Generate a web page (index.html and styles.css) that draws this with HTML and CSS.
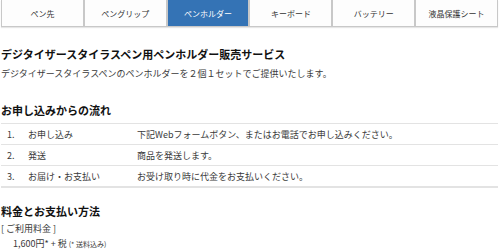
FILE: index.html
```html
<!DOCTYPE html>
<html lang="ja">
<head>
    <meta charset="UTF-8">
    <meta name="viewport" content="width=device-width, initial-scale=1.0">
    <title>ペンホルダー販売サービス</title>
    <link rel="stylesheet" href="styles.css">
</head>
<body>
    <ul class="tabs">
        <li class="tab">ペン先</li>
        <li class="tab">ペングリップ</li>
        <li class="tab active">ペンホルダー</li>
        <li class="tab">キーボード</li>
        <li class="tab">バッテリー</li>
        <li class="tab">液晶保護シート</li>
    </ul>

    <h1 class="title">デジタイザースタイラスペン用ペンホルダー販売サービス</h1>
    <p class="lead">デジタイザースタイラスペンのペンホルダーを２個１セットでご提供いたします。</p>

    <h2 class="section-title">お申し込みからの流れ</h2>
    <table class="flow">
        <tr>
            <td class="num">1.</td>
            <td class="step">お申し込み</td>
            <td>下記Webフォームボタン、またはお電話でお申し込みください。</td>
        </tr>
        <tr>
            <td class="num">2.</td>
            <td class="step">発送</td>
            <td>商品を発送します。</td>
        </tr>
        <tr>
            <td class="num">3.</td>
            <td class="step">お届け・お支払い</td>
            <td>お受け取り時に代金をお支払いください。</td>
        </tr>
    </table>

    <h2 class="section-title price-title">料金とお支払い方法</h2>
    <p class="label">[ ご利用料金 ]</p>
    <p class="price">1,600円* + 税 <span class="note">(* 送料込み)</span></p>
</body>
</html>
```

FILE: styles.css
```css
body {
    font-family: "Noto Sans CJK JP", "Noto Sans", sans-serif;
    color: #3a3a3a;
    margin: 0;
    padding: 0 2px 0 1px;
    font-size: 9px;
}
.tabs {
    display: flex;
    list-style: none;
    margin: 0;
    padding: 0;
    height: 26px;
    border: 1px solid #c8c8c8;
    border-top: none;
    box-shadow: 0 1px 1px #e6e6e6;
}
.tab {
    flex: 1;
    display: flex;
    align-items: center;
    justify-content: center;
    font-size: 8px;
    color: #333;
    background: #fdfdfd;
    border-right: 2px solid #c8c8c8;
}
.tab:last-child {
    border-right: none;
}
.tab.active {
    background: #3473b5;
    color: #fff;
}
.title {
    font-size: 11px;
    color: #111;
    margin: 20px 0 0;
    line-height: 14px;
}
.lead {
    margin: 6px 0 0;
    line-height: 14px;
}
.section-title {
    font-size: 11px;
    color: #111;
    margin: 22px 0 0;
    line-height: 14px;
}
.flow {
    width: 100%;
    border-collapse: collapse;
    margin-top: 6px;
}
.flow td {
    border-top: 1px solid #e3e3e3;
    border-bottom: 1px solid #e3e3e3;
    height: 20px;
    padding: 0;
    vertical-align: middle;
}
.flow tr:last-child td {
    border-bottom: 2px solid #e3e3e3;
}
.num {
    width: 21px;
    padding-left: 6px !important;
}
.step {
    width: 109px;
}
.price-title {
    margin-top: 16px;
}
.label {
    margin: 4px 0 0;
    line-height: 14px;
}
.price {
    margin: 1px 0 0 12px;
    line-height: 14px;
}
.note {
    font-size: 7px;
}
```
